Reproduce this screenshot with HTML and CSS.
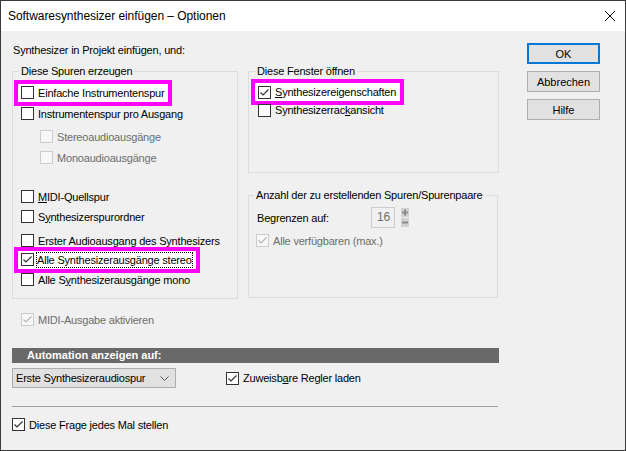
FILE: index.html
```html
<!DOCTYPE html>
<html lang="de">
<head>
  <meta charset="UTF-8" />
  <title>Softwaresynthesizer einfügen – Optionen</title>
  <link rel="stylesheet" href="styles.css">
</head>
<body>
  <div class="window">
    <div class="titlebar">
      <span class="title">Softwaresynthesizer einfügen – Optionen</span>
      <svg class="close" width="10" height="10" viewBox="0 0 10 10"><path d="M0 0 10 10M10 0 0 10" /></svg>
    </div>

    <div class="client">
      <div class="main">
        <p class="intro">Synthesizer in Projekt einfügen, und:</p>

        <div class="groups">
          <fieldset class="group tracks">
            <legend>Diese Spuren erzeugen</legend>
            <div class="check r1"><span class="mark"><span class="box"></span>Einfache Instrumentenspur</span></div>
            <div class="check r2"><span class="box"></span>Instrumentenspur pro Ausgang</div>
            <div class="check sub disabled r3"><span class="box"></span>Stereoaudioausgänge</div>
            <div class="check sub disabled r4"><span class="box"></span>Monoaudioausgänge</div>
            <div class="check r5"><span class="box"></span><u>M</u>IDI-Quellspur</div>
            <div class="check r6"><span class="box"></span>S<u>y</u>nthesizerspurordner</div>
            <div class="check r7"><span class="box"></span>Erster Audioausgang des Synthesizers</div>
            <div class="check r8"><span class="mark"><span class="box on"><svg viewBox="0 0 11 11"><path d="M1.5 5.5 4 8 9.5 2.5" /></svg></span><span class="focus">Alle Synthesizerausgänge stereo</span></span></div>
            <div class="check r9"><span class="box"></span>Alle S<u>y</u>nthesizerausgänge mono</div>
          </fieldset>

          <div class="groups-right">
            <fieldset class="group windows">
              <legend>Diese Fenster öffnen</legend>
              <div class="check w1"><span class="mark"><span class="box on"><svg viewBox="0 0 11 11"><path d="M1.5 5.5 4 8 9.5 2.5" /></svg></span><span><u>S</u>ynthesizereigenschaften</span></span></div>
              <div class="check w2"><span class="box"></span>Synthesizerrac<u>k</u>ansicht</div>
            </fieldset>

            <fieldset class="group count">
              <legend>Anzahl der zu erstellenden Spuren/Spurenpaare</legend>
              <div class="limit">
                <span class="limit-label">Begrenzen auf:</span>
                <span class="spin-field">16</span>
                <svg class="spin" width="8" height="19" viewBox="0 0 8 19">
                  <rect x="0" y="0" width="8" height="9" fill="#d0d0d0" />
                  <rect x="0" y="10" width="8" height="9" fill="#d0d0d0" />
                  <path d="M1 4.5h6M4 1.5v6M1 14.5h6" stroke="#8c8c8c" stroke-width="2" />
                </svg>
              </div>
              <div class="check disabled all"><span class="box on"><svg viewBox="0 0 11 11"><path d="M1.5 5.5 4 8 9.5 2.5" /></svg></span>Alle verfügbaren (max.)</div>
            </fieldset>
          </div>
        </div>

        <div class="check disabled midi"><span class="box on"><svg viewBox="0 0 11 11"><path d="M1.5 5.5 4 8 9.5 2.5" /></svg></span>MIDI-Ausgabe aktivieren</div>

        <div class="band">Automation anzeigen auf:</div>

        <div class="auto-row">
          <div class="select">
            <span>Erste Synthesizeraudiospur</span>
            <svg width="9" height="5" viewBox="0 0 9 5"><path d="M0.5 0.5 4.5 4.5 8.5 0.5" /></svg>
          </div>
          <div class="check knobs"><span class="box on"><svg viewBox="0 0 11 11"><path d="M1.5 5.5 4 8 9.5 2.5" /></svg></span>Zuweisb<u>a</u>re Regler laden</div>
        </div>

        <div class="sep"></div>

        <div class="check ask"><span class="box on"><svg viewBox="0 0 11 11"><path d="M1.5 5.5 4 8 9.5 2.5" /></svg></span>Diese Frage jedes Mal stellen</div>
      </div>

      <div class="buttons">
        <button class="btn default">OK</button>
        <button class="btn">Abbrechen</button>
        <button class="btn">Hilfe</button>
      </div>
    </div>
  </div>
</body>
</html>
```

FILE: styles.css
```css
body {
  margin: 0;
  background: #f0f0f0;
  font-family: 'Liberation Sans', Arial, sans-serif;
  font-size: 11px;
  letter-spacing: -0.2px;
  color: #000;
}

.window {
  width: 626px;
  height: 451px;
  box-sizing: border-box;
  border: 1px solid #3a3a3a;
  background: #f0f0f0;
}

.titlebar {
  height: 30px;
  background: #fff;
  display: flex;
  align-items: center;
  justify-content: space-between;
  padding: 0 10px 0 7px;
}

.title {
  font-size: 12px;
  letter-spacing: -0.05px;
}

.close path {
  stroke: #000;
  stroke-width: 1;
  fill: none;
}

.client {
  display: flex;
  padding: 12px 0 0 11px;
}

.main {
  width: 487px;
}

.intro {
  margin: 0;
  line-height: 14px;
  padding-left: 1px;
}

.groups {
  display: flex;
  gap: 10px;
  margin-top: 7px;
}

.group {
  margin: 0;
  padding: 0 0 0 8px;
  border: 1px solid #dcdcdc;
  box-sizing: border-box;
  min-width: 0;
}

.group legend {
  padding: 0 2px;
  margin-left: -2px;
  line-height: 14px;
}

.tracks {
  width: 227px;
  height: 235px;
}

.groups-right {
  display: flex;
  flex-direction: column;
}

.windows {
  width: 251px;
  height: 109px;
  padding-left: 9px;
}

.windows legend {
  margin-left: -3px;
}

.count {
  width: 250px;
  height: 110px;
  margin-top: 15px;
  padding-left: 7px;
}

/* checkbox rows */
.check {
  display: flex;
  align-items: center;
  height: 19px;
  white-space: nowrap;
}

.box {
  width: 13px;
  height: 13px;
  box-sizing: border-box;
  border: 1px solid #333;
  background: #fff;
  margin-right: 4px;
  flex: none;
  display: flex;
  align-items: center;
  justify-content: center;
}

.box svg {
  width: 11px;
  height: 11px;
}

.box svg path {
  fill: none;
  stroke: #333;
  stroke-width: 1.2;
}

.disabled {
  color: #6d6d6d;
}

.disabled .box {
  border-color: #cccccc;
  background: #f7f7f7;
}

.disabled .box svg path {
  stroke: #b5b5b5;
}

.sub {
  padding-left: 19px;
}

.mark {
  display: flex;
  align-items: center;
  height: 18px;
  background: #fff;
  margin-left: -3px;
  padding: 0 4px 0 3px;
  outline: 4px solid #ff00ff;
}

.focus {
  outline: 1px dotted #000;
  line-height: 14px;
  margin-left: -1px;
}

.r1 { margin-top: 5px; }
.r2 { margin-top: 2px; }
.r3 { margin-top: 4px; }
.r4 { margin-top: 2px; }
.r5 { margin-top: 20px; }
.r6 { margin-top: 1px; }
.r7 { margin-top: 5px; }
.r8 { margin-top: 0; }
.r9 { margin-top: 1px; }

.w1 { margin-top: 5px; height: 18px; }
.w2 { height: 18px; }

/* count group */
.limit {
  display: flex;
  align-items: center;
  height: 21px;
  margin-top: 5px;
  padding-left: 1px;
}

.limit-label {
  width: 114px;
}

.spin-field {
  width: 24px;
  height: 21px;
  box-sizing: border-box;
  border: 1px solid #cccccc;
  color: #6d6d6d;
  font-size: 12px;
  line-height: 19px;
  padding-left: 5px;
}

.spin {
  margin-left: 6px;
}

.all {
  margin-top: 3px;
}

.midi {
  margin: 11px 0 0 9px;
}

.band {
  margin-top: 19px;
  height: 15px;
  line-height: 15px;
  background: #696969;
  color: #fff;
  font-weight: bold;
  letter-spacing: 0;
  padding-left: 15px;
}

.auto-row {
  display: flex;
  align-items: center;
  margin-top: 5px;
}

.select {
  width: 164px;
  height: 20px;
  box-sizing: border-box;
  border: 1px solid #adadad;
  background: #e1e1e1;
  display: flex;
  align-items: center;
  justify-content: space-between;
  padding: 0 6px 0 3px;
}

.select svg path {
  fill: none;
  stroke: #555;
  stroke-width: 1;
}

.knobs {
  margin-left: 50px;
}

.sep {
  width: 486px;
  margin-top: 18px;
  border-top: 1px solid #a0a0a0;
}

.ask {
  margin-top: 8px;
}

/* dialog buttons */
.buttons {
  margin-left: 28px;
  display: flex;
  flex-direction: column;
  gap: 7px;
}

.btn {
  width: 73px;
  height: 21px;
  box-sizing: border-box;
  border: 1px solid #adadad;
  background: #e1e1e1;
  font-family: 'Liberation Sans', Arial, sans-serif;
  font-size: 11px;
  color: #000;
  padding: 0;
}

.btn.default {
  border: 2px solid #0078d7;
}
```
